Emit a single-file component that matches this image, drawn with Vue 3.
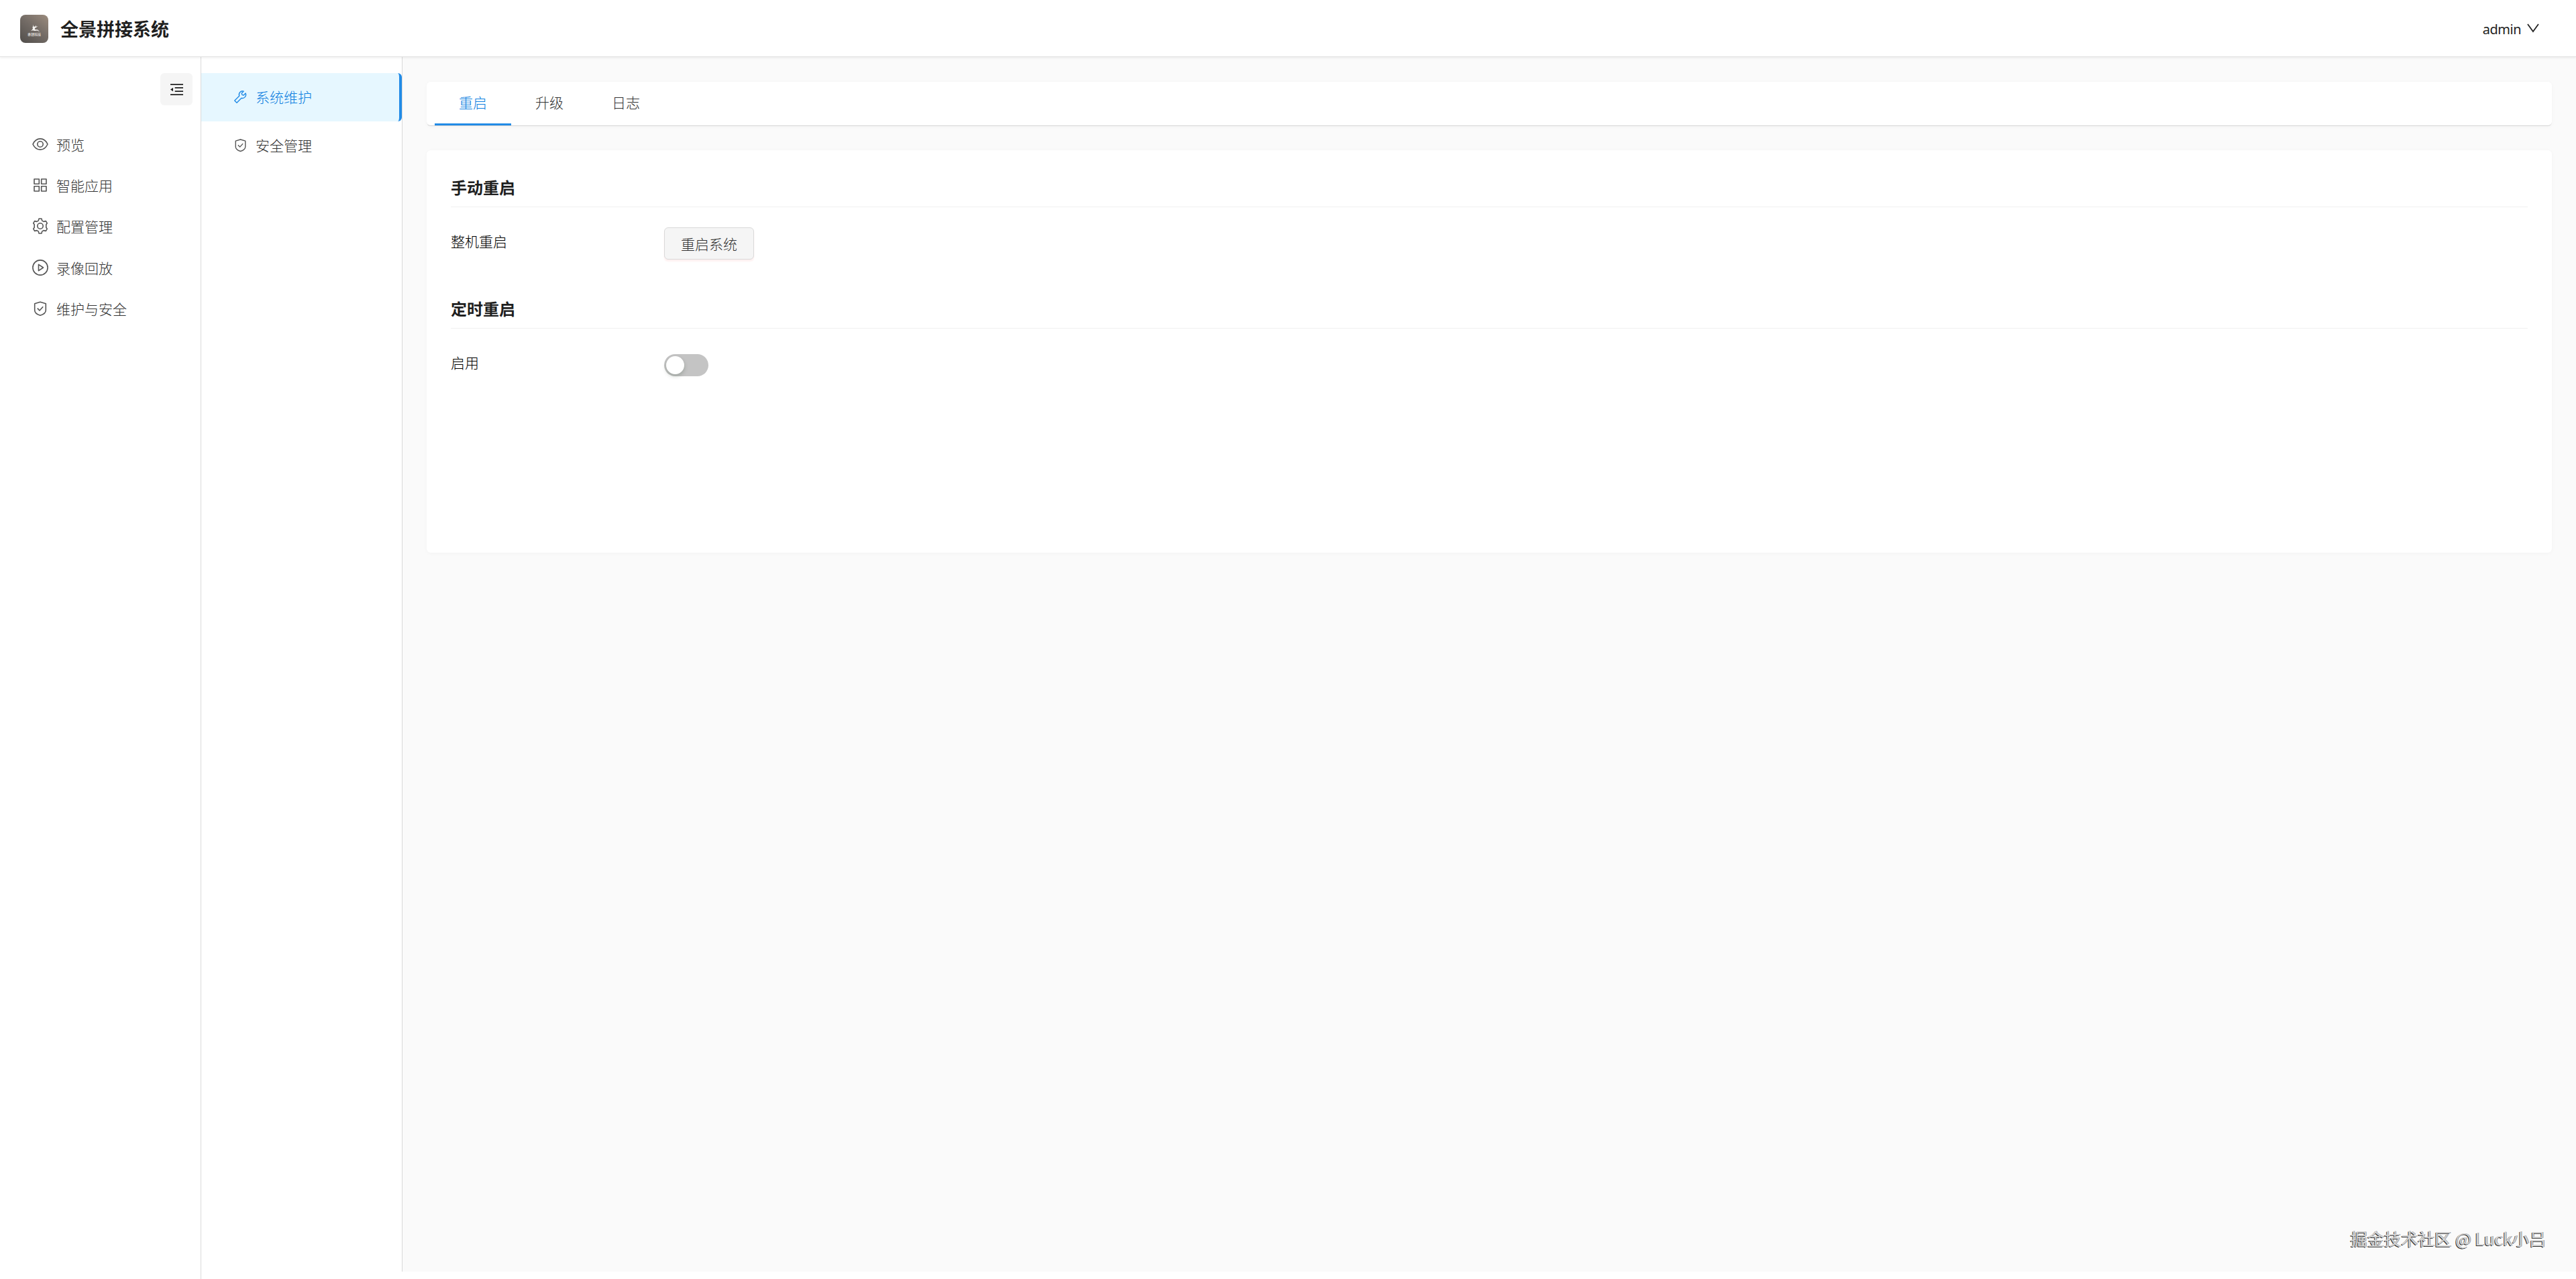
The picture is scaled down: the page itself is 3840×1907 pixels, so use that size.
<template>
  <div class="layout">
    <!-- 顶部栏 -->
    <header class="header">
      <div class="brand">
        <svg class="logo" viewBox="0 0 42 42">
          <defs>
            <linearGradient id="logoBg" x1="1" y1="0" x2="0.2" y2="1">
              <stop offset="0" stop-color="#9c8c7e" />
              <stop offset="0.5" stop-color="#756d67" />
              <stop offset="1" stop-color="#56524f" />
            </linearGradient>
          </defs>
          <rect width="42" height="42" rx="8" fill="url(#logoBg)" />
          <path
            d="M19 14.500l1.200 3 2 .3 1.300-2.300.2 2.300 2.800-.8-2.600 1.900-2 1 .3 2 4 .4 3 2.900-3.800-1.600-3.800.3-2.600-.6-3 .8 2.200-2 .8-1.700-.6-1.600.8-1.500z"
            fill="#f4f2ef"
          />
          <text x="21" y="30.500" class="logo-text">睿铎科技</text>
        </svg>
        <h1 class="brand-name">全景拼接系统</h1>
      </div>
      <div class="user">
        <span class="user-name">admin</span>
        <svg class="arrow" viewBox="0 0 18 14"><path d="M1 1l8 11 8-11" /></svg>
      </div>
    </header>

    <div class="body">
      <!-- 一级菜单 -->
      <aside class="sider">
        <div class="collapse-row">
          <button class="collapse">
            <svg viewBox="0 0 19 17">
              <path d="M0 0h19v1.800H0zM6.700 5h12.300v1.700H6.700zM6.700 10.200h12.300v1.700H6.700zM0 15.200h19V17H0zM4 5.700v5.600L0 8.500z" />
            </svg>
          </button>
        </div>
        <ul class="menu">
          <li v-for="m in menus" :key="m.name" class="menu-item">
            <svg class="icon" viewBox="0 0 24 24"><path :d="icons[m.icon]" /></svg>
            <span>{{ m.name }}</span>
          </li>
        </ul>
      </aside>

      <div class="page">
        <!-- 二级菜单 -->
        <ul class="sub-menu">
          <li
            v-for="s in subMenus"
            :key="s.name"
            class="sub-item"
            :class="{ active: s.name === activeSub }"
            @click="activeSub = s.name"
          >
            <svg class="icon small" viewBox="0 0 24 24"><path :d="icons[s.icon]" /></svg>
            <span>{{ s.name }}</span>
          </li>
        </ul>

        <main class="content">
          <nav class="tabs">
            <div
              v-for="t in tabs"
              :key="t"
              class="tab"
              :class="{ active: t === activeTab }"
              @click="activeTab = t"
            >
              {{ t }}
            </div>
          </nav>

          <section class="card">
            <h2 class="title">手动重启</h2>
            <div class="row">
              <span class="label">整机重启</span>
              <button class="btn">重启系统</button>
            </div>

            <h2 class="title">定时重启</h2>
            <div class="row">
              <span class="label">启用</span>
              <button class="switch" :class="{ on: enabled }" @click="enabled = !enabled">
                <i class="knob"></i>
              </button>
            </div>
          </section>
        </main>
      </div>
    </div>

    <div class="watermark">掘金技术社区 @ Luck小吕</div>
  </div>
</template>

<script setup>
import { ref } from 'vue';

const menus = [
  { name: '预览', icon: 'eye' },
  { name: '智能应用', icon: 'grid' },
  { name: '配置管理', icon: 'setting' },
  { name: '录像回放', icon: 'play' },
  { name: '维护与安全', icon: 'shield' },
];

const subMenus = [
  { name: '系统维护', icon: 'tool' },
  { name: '安全管理', icon: 'shield' },
];

const tabs = ['重启', '升级', '日志'];

const activeSub = ref('系统维护');
const activeTab = ref('重启');
const enabled = ref(false);

// 图标路径，统一 24x24 描边
const icons = {
  eye: 'M1 12C3.500 6.500 7.300 3.900 12 3.900S20.500 6.500 23 12C20.500 17.500 16.700 20.100 12 20.100S3.500 17.500 1 12zM12 7.800a4.200 4.200 0 1 0 0 8.400a4.200 4.200 0 1 0 0-8.400z',
  grid: 'M3 3h7.300v7.300H3zM13.700 3H21v7.300h-7.300zM3 13.700h7.300V21H3zM13.700 13.700H21V21h-7.300z',
  setting:
    'M10.100 1h3.800l.9 3.100 2.300 1.300 3.300-.8 1.900 3.200-1.500 2v4.400l1.500 2-1.900 3.200-3.300-.8-2.300 1.300-.9 3.100h-3.800l-.9-3.100-2.300-1.300-3.300.8-1.900-3.200 1.500-2V9.800l-1.500-2 1.900-3.200 3.300.8 2.300-1.300zM12 7.800a4.200 4.200 0 1 0 0 8.400a4.200 4.200 0 1 0 0-8.400z',
  play: 'M12 .9a11.100 11.100 0 1 0 0 22.200a11.100 11.100 0 1 0 0-22.200zM9.500 7.300v9.400l7-4.700z',
  shield: 'M12 2.300l8.300 2.500v9.700c0 3.700-4 6.500-8.300 7.800-4.300-1.300-8.300-4.100-8.300-7.800V4.800zM7.800 11.600l3.200 3.400 5.200-5.700',
  tool: 'M20.700 5.800l-3.400 3.300-2.600-.7-.7-2.600 3.400-3.400a6 6 0 0 0-7.400 8L2 18.300 5.700 22l7.900-8a6 6 0 0 0 7.100-8.200z',
};
</script>

<style>
body {
  background: #fff;
}
</style>

<style scoped>
.layout {
  position: relative;
  height: 1907px;
  display: flex;
  flex-direction: column;
  background: #fff;
  font-family: 'Noto Sans CJK SC', sans-serif;
  font-size: 21px;
  font-weight: 300;
  color: #333;
  overflow: hidden;
}

ul {
  list-style: none;
  margin: 0;
  padding: 0;
}
h1,
h2 {
  margin: 0;
}
svg {
  display: block;
}

/* 顶部栏 */
.header {
  position: relative;
  z-index: 2;
  flex: none;
  box-sizing: border-box;
  height: 85px;
  padding: 0 55px 0 30px;
  display: flex;
  align-items: center;
  justify-content: space-between;
  background: #fff;
  border-bottom: 1px solid #e2e2e2;
  box-shadow: 0 1px 4px rgba(0, 0, 0, 0.08);
}
.brand {
  display: flex;
  align-items: center;
  gap: 18px;
}
.logo {
  width: 42px;
  height: 42px;
  margin-top: 2px;
}
.logo-text {
  font-size: 5px;
  font-weight: 700;
  fill: #dedad6;
  text-anchor: middle;
}
.brand-name {
  padding-top: 2px;
  font-size: 27px;
  line-height: 40px;
  font-weight: 700;
  color: #1f1f1f;
}
.user {
  display: flex;
  align-items: center;
  gap: 9px;
  color: #222;
}
.user-name {
  padding-top: 2px;
  font-family: 'Noto Sans', sans-serif;
  font-weight: 400;
  font-size: 20px;
  letter-spacing: -0.5px;
}
.arrow {
  width: 18px;
  height: 14px;
  fill: none;
  stroke: #222;
  stroke-width: 1.8;
}

.body {
  flex: 1;
  display: flex;
  min-height: 0;
}

/* 一级菜单 */
.sider {
  flex: none;
  box-sizing: border-box;
  width: 300px;
  border-right: 1px solid #d9d9d9;
}
.collapse-row {
  display: flex;
  justify-content: flex-end;
  padding: 24px 12px 0 0;
}
.collapse {
  width: 48px;
  height: 48px;
  padding: 0;
  border: none;
  border-radius: 6px;
  background: #f5f5f5;
  display: flex;
  align-items: center;
  justify-content: center;
}
.collapse svg {
  width: 19px;
  height: 17px;
  fill: #222;
}
.menu {
  padding-top: 27px;
}
.menu-item {
  display: flex;
  align-items: center;
  gap: 12px;
  height: 61.4px;
  padding-left: 48px;
}
.menu-item span,
.sub-item span {
  line-height: 30px;
}
.icon {
  flex: none;
  width: 24px;
  height: 24px;
  fill: none;
  stroke: #555;
  stroke-width: 1.6;
  stroke-linejoin: round;
}
.icon.small {
  width: 21px;
  height: 21px;
}

.page {
  flex: 1;
  display: flex;
  margin-bottom: 11px;
  background: #fafafa;
}

/* 二级菜单 */
.sub-menu {
  flex: none;
  box-sizing: border-box;
  width: 300px;
  padding-top: 24px;
  background: #fff;
  border-right: 1px solid #d9d9d9;
}
.sub-item {
  box-sizing: border-box;
  height: 72px;
  padding: 0 0 2px 48px;
  display: flex;
  align-items: center;
  gap: 12px;
  cursor: pointer;
}
.sub-item.active {
  color: #0f7fe0;
  background: #e6f7ff;
  border-right: 4px solid #228be6;
  border-radius: 0 6px 6px 0;
}
.sub-item.active .icon {
  stroke: #228be6;
}

.content {
  flex: 1;
  padding: 37px 36px 0;
}
.tabs {
  box-sizing: border-box;
  height: 66px;
  padding-left: 12px;
  display: flex;
  background: #fff;
  border-bottom: 1px solid #d4d4d4;
  border-radius: 6px;
  box-shadow: 0 1px 6px rgba(0, 0, 0, 0.03);
}
.tab {
  box-sizing: border-box;
  width: 114px;
  height: 65px;
  line-height: 60px;
  text-align: center;
  border-bottom: 3px solid transparent;
  cursor: pointer;
}
.tab.active {
  color: #0f7fe0;
  border-bottom-color: #228be6;
}

.card {
  box-sizing: border-box;
  height: 600px;
  margin-top: 36px;
  padding: 30px 36px;
  background: #fff;
  border-radius: 6px;
  box-shadow: 0 1px 6px rgba(0, 0, 0, 0.03);
}
.title {
  box-sizing: border-box;
  height: 55px;
  line-height: 50px;
  font-size: 24px;
  font-weight: 700;
  color: #1f1f1f;
  border-bottom: 1px solid #f0f0f0;
}
.row {
  height: 126px;
  padding-top: 30px;
  box-sizing: border-box;
  display: flex;
  align-items: flex-start;
}
.label {
  width: 318px;
  line-height: 40px;
  color: #000;
}
.btn {
  width: 134px;
  height: 48px;
  padding: 0;
  font: inherit;
  color: #333;
  background: #f5f5f5;
  border: 1px solid #d9d9d9;
  border-radius: 6px;
  box-shadow: 0 3px 2px rgba(255, 77, 79, 0.08);
}
.switch {
  width: 66px;
  height: 33px;
  margin-top: 8px;
  padding: 3px;
  display: flex;
  border: none;
  border-radius: 17px;
  background: #c4c4c4;
}
.switch.on {
  justify-content: flex-end;
  background: #228be6;
}
.knob {
  width: 27px;
  height: 27px;
  border-radius: 50%;
  background: #fff;
  box-shadow: 0 3px 6px rgba(0, 35, 11, 0.2);
}

/* 水印 */
.watermark {
  position: absolute;
  right: 45px;
  bottom: 43px;
  font-size: 25px;
  font-weight: 400;
  line-height: 36px;
  letter-spacing: 0.1px;
  color: #d6d6d6;
  text-shadow: -1px 1px 0 #333, 1px 0 0 #999;
}
</style>
